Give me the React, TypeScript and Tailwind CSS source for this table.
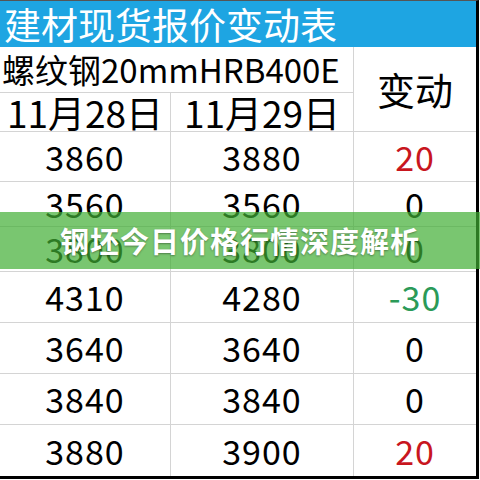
import React from "react";

type Row = { a: string; b: string; diff: string; tone: "up" | "down" | "flat"; h: string };

const rows: Row[] = [
  { a: "3860", b: "3880", diff: "20", tone: "up", h: "h-[50px]" },
  { a: "3560", b: "3560", diff: "0", tone: "flat", h: "h-[45px]" },
  { a: "3800", b: "3800", diff: "0", tone: "flat", h: "h-[45px]" },
  { a: "4310", b: "4280", diff: "-30", tone: "down", h: "h-[51px]" },
  { a: "3640", b: "3640", diff: "0", tone: "flat", h: "h-[51px]" },
  { a: "3840", b: "3840", diff: "0", tone: "flat", h: "h-[51px]" },
  { a: "3880", b: "3900", diff: "20", tone: "up", h: "h-[51px]" },
];

const toneClass = {
  up: "text-[#c8161e]",
  down: "text-[#2b9a58]",
  flat: "text-black",
};

const font = { fontFamily: '"Noto Sans CJK SC", "Open Sans", sans-serif' };

const App: React.FC = () => {
  return (
    <div className="relative w-[480px] h-[480px] overflow-hidden bg-white" style={font}>
      <div className="w-[479px] border-t border-b-[3px] border-r-[3px] border-t-[#555] border-b-black border-r-black">
        {/* title bar */}
        <div className="h-[46px] bg-[#1ea5e2] flex items-center pl-[4px]">
          <span className="text-[37px] leading-[1.15] text-white whitespace-nowrap">建材现货报价变动表</span>
        </div>

        {/* header rows */}
        <div className="grid grid-cols-[171px_183px_1fr]">
          <div className="col-span-2 h-[46px] flex items-center pl-[2px] border-r border-[#d4d4d4] border-b">
            <span className="text-[33px] leading-[1.15] text-black whitespace-nowrap">螺纹钢20mmHRB400E</span>
          </div>
          <div className="row-span-2 flex items-center justify-center border-b border-[#d4d4d4]">
            <span className="text-[38px] leading-[1.15] text-black">变动</span>
          </div>
          <div className="h-[39px] flex items-center justify-center border-r border-b border-[#d4d4d4]">
            <span className="text-[37px] leading-[1.1] text-black whitespace-nowrap">11月28日</span>
          </div>
          <div className="h-[39px] flex items-center justify-center border-r border-b border-[#d4d4d4]">
            <span className="text-[37px] leading-[1.1] text-black whitespace-nowrap">11月29日</span>
          </div>

          {rows.map((r, i) => (
            <React.Fragment key={i}>
              <div className={`${r.h} flex items-center justify-center border-r border-[#d4d4d4] ${i < rows.length - 1 ? "border-b" : ""}`}>
                <span className="text-[34px] leading-[1.15] text-black tracking-[1px]">{r.a}</span>
              </div>
              <div className={`${r.h} flex items-center justify-center border-r border-[#d4d4d4] ${i < rows.length - 1 ? "border-b" : ""}`}>
                <span className="text-[34px] leading-[1.15] text-black tracking-[1px]">{r.b}</span>
              </div>
              <div className={`${r.h} flex items-center justify-center border-[#d4d4d4] ${i < rows.length - 1 ? "border-b" : ""}`}>
                <span className={`text-[34px] leading-[1.15] tracking-[1px] ${toneClass[r.tone]}`}>{r.diff}</span>
              </div>
            </React.Fragment>
          ))}
        </div>
      </div>

      {/* overlay banner */}
      <div className="absolute left-0 right-0 top-[212px] h-[57px] bg-[#40ae33]/70 flex items-center justify-center">
        <span className="text-[29px] font-bold text-white tracking-[1px] [text-shadow:0_1px_2px_rgba(0,0,0,0.35)]">
          钢坯今日价格行情深度解析
        </span>
      </div>
    </div>
  );
};

export default App;
